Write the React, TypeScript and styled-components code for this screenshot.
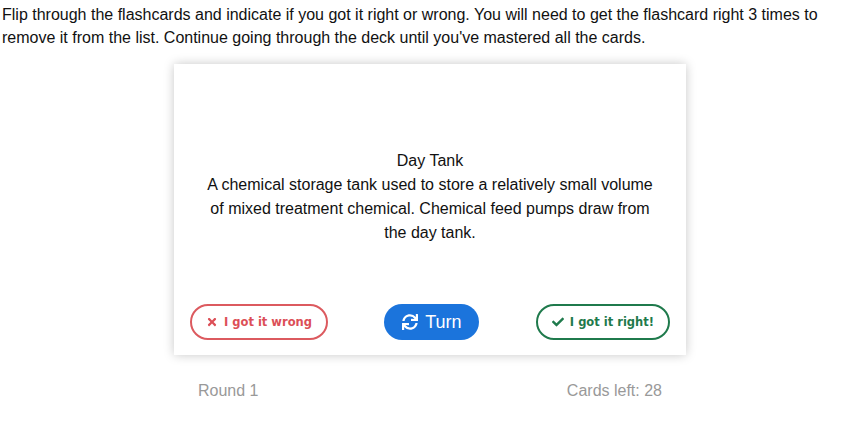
import React from "react";
import styled, { createGlobalStyle } from "styled-components";
import { FaTimes, FaCheck, FaSync } from "react-icons/fa";

const GlobalStyle = createGlobalStyle`
  body {
    margin: 0;
    background: #fff;
    font-family: "Liberation Sans", Arial, sans-serif;
    color: #111;
  }
`;

const Page = styled.div`
  width: 860px;
  padding: 3px 2px 0;
  box-sizing: border-box;
`;

const Intro = styled.p`
  margin: 0;
  width: 830px;
  font-size: 16px;
  line-height: 23px;
`;

const Card = styled.div`
  width: 512px;
  height: 291px;
  margin: 15px auto 0;
  background: #fff;
  box-shadow: 0 0 10px rgba(0, 0, 0, 0.22);
  display: flex;
  flex-direction: column;
  box-sizing: border-box;
`;

const CardText = styled.div`
  flex: 1;
  padding: 85px 32px 0;
  text-align: center;
  font-size: 16px;
  line-height: 24px;
  color: #111;
`;

const Actions = styled.div`
  display: flex;
  align-items: center;
  justify-content: space-between;
  padding: 0 16px 15px;
`;

const Pill = styled.button<{ $tone: "wrong" | "right" }>`
  height: 36px;
  padding: 0 14px;
  border-radius: 18px;
  background: #fff;
  border: 2px solid ${(p) => (p.$tone === "wrong" ? "#dc5a5f" : "#1f7a4c")};
  color: ${(p) => (p.$tone === "wrong" ? "#dc4f57" : "#1f7a4c")};
  font-family: "DejaVu Sans", Verdana, sans-serif;
  font-weight: bold;
  font-size: 11.5px;
  display: flex;
  align-items: center;
  gap: 6px;
  cursor: pointer;
  svg {
    font-size: 12px;
  }
`;

const TurnButton = styled.button`
  height: 36px;
  width: 95px;
  border-radius: 18px;
  border: none;
  background: #1b74dc;
  color: #fff;
  font-family: "Liberation Sans", Arial, sans-serif;
  font-size: 18px;
  display: flex;
  align-items: center;
  justify-content: center;
  gap: 7px;
  cursor: pointer;
  svg {
    font-size: 16px;
  }
`;

const Footer = styled.div`
  width: 464px;
  margin: 27px auto 0;
  display: flex;
  justify-content: space-between;
  font-size: 16px;
  color: #999;
`;

export default function App() {
  return (
    <>
      <GlobalStyle />
      <Page>
        <Intro>
          Flip through the flashcards and indicate if you got it right or wrong. You will need to get the flashcard right 3 times to remove it from the list. Continue going through the deck until you've mastered all the cards.
        </Intro>
        <Card>
          <CardText>
            Day Tank
            <br />
            A chemical storage tank used to store a relatively small volume of mixed treatment chemical. Chemical feed pumps draw from the day tank.
          </CardText>
          <Actions>
            <Pill $tone="wrong">
              <FaTimes />I got it wrong
            </Pill>
            <TurnButton>
              <FaSync />
              Turn
            </TurnButton>
            <Pill $tone="right">
              <FaCheck />I got it right!
            </Pill>
          </Actions>
        </Card>
        <Footer>
          <span>Round 1</span>
          <span>Cards left: 28</span>
        </Footer>
      </Page>
    </>
  );
}
